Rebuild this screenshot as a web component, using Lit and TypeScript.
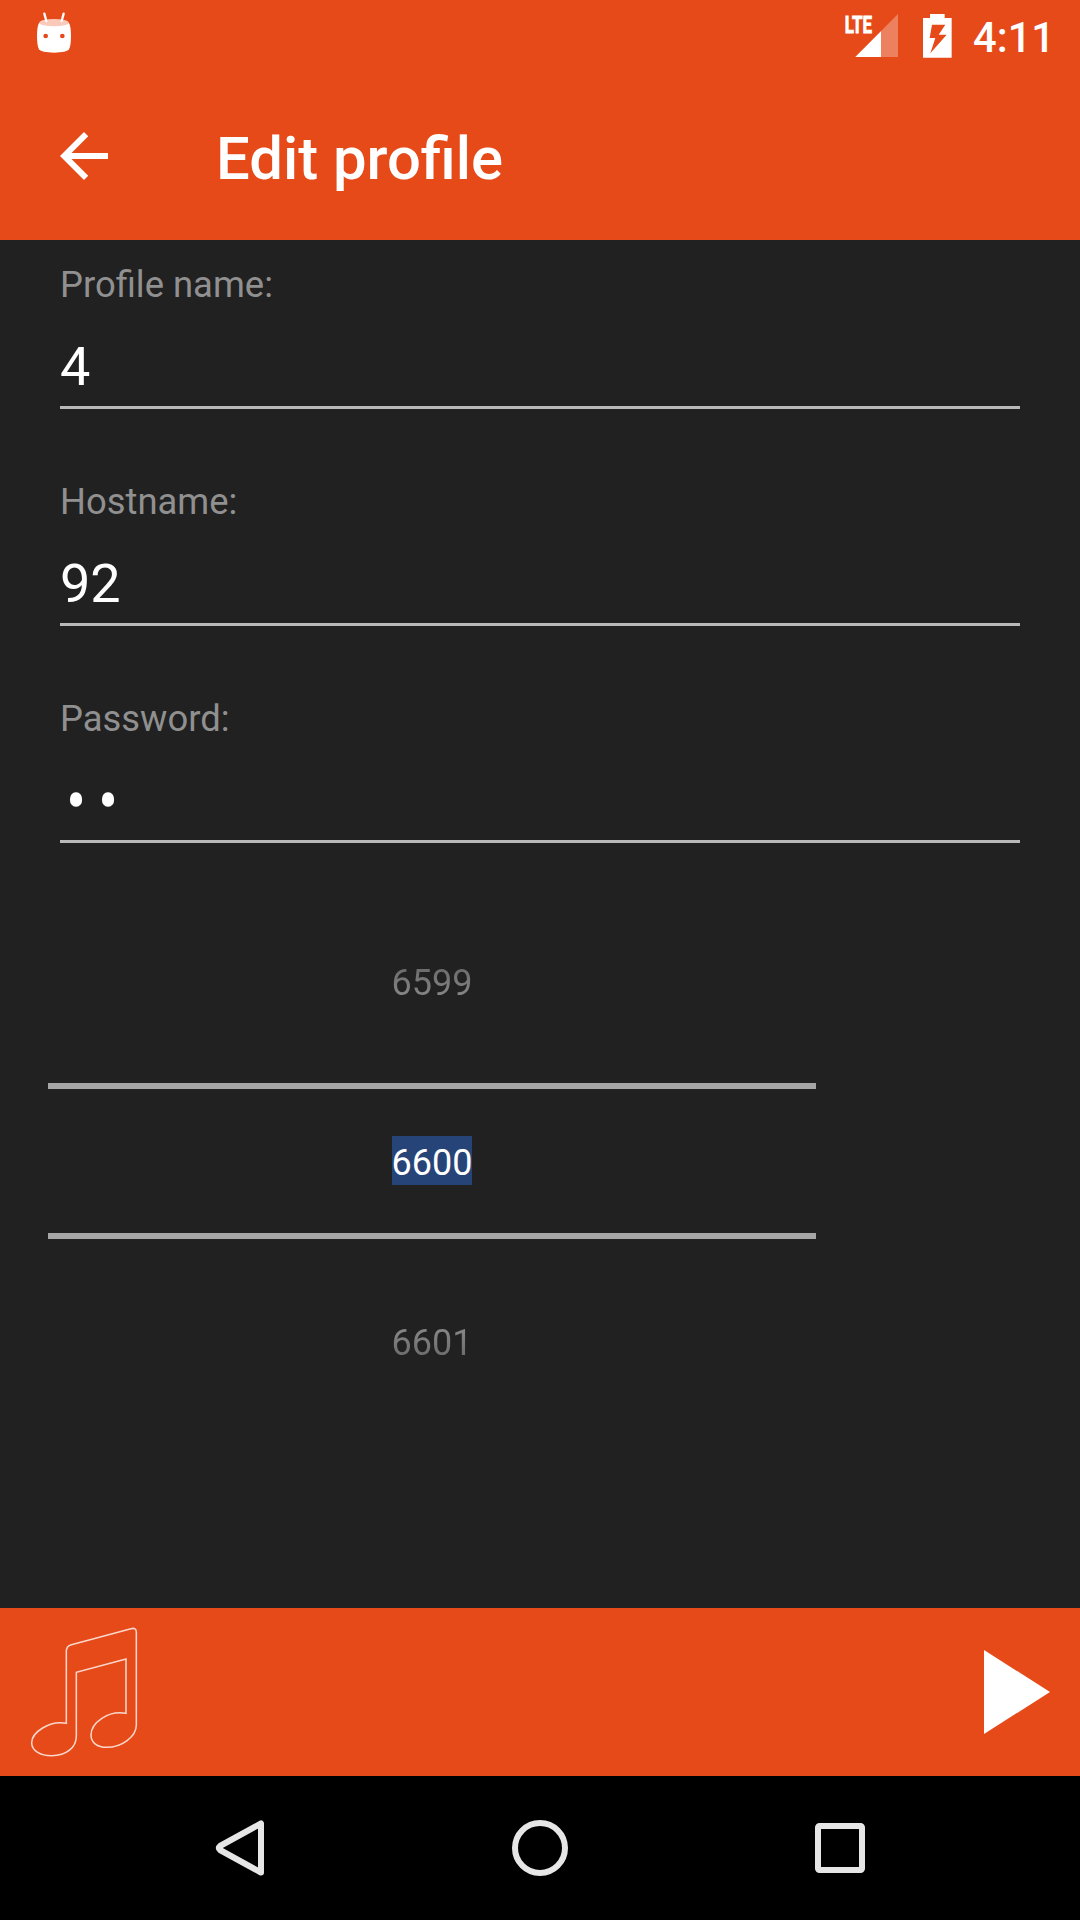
import { LitElement, html, css } from "lit";
import { customElement, property } from "lit/decorators.js";

@customElement("status-bar")
class StatusBar extends LitElement {
  static styles = css`
    :host {
      display: flex;
      justify-content: space-between;
      height: 72px;
      color: #fff;
    }
    svg {
      display: block;
    }
    .right {
      display: flex;
    }
    .lte {
      font: 700 74px Roboto, sans-serif;
      stroke: #fff;
      stroke-width: 2.5px;
    }
    .clock {
      width: 112px;
      padding-right: 25px;
      padding-top: 10px;
      font: 500 41.6px/56px Roboto, sans-serif;
      text-align: right;
      box-sizing: border-box;
    }
  `;
  render() {
    return html`
      <svg width="80" height="72" viewBox="0 0 240 216">
        <path
          d="M117 69Q162 53 207 69Q213 80 213 107Q213 138 207 148Q200 158 162 158Q124 158 117 148Q111 138 111 107Q111 80 117 69Z"
          fill="#fff"
        />
        <ellipse cx="162" cy="68" rx="44" ry="11" fill="#fac9ba" />
        <path d="M133 41l6 22M191 41l-6 22" stroke="#fff" stroke-width="7" stroke-linecap="round" />
        <circle cx="137" cy="108" r="7" fill="#e64a19" />
        <circle cx="187" cy="108" r="7" fill="#e64a19" />
      </svg>
      <div class="right">
        <svg width="148" height="72" viewBox="0 0 444 216">
          <path d="M106 171L234 42V171Z" fill="#fff" fill-opacity=".3" />
          <path d="M106 171L183 94V171Z" fill="#fff" />
          <text class="lte" x="74" y="100" textLength="82" lengthAdjust="spacingAndGlyphs" fill="#fff">LTE</text>
          <path
            fill="#fff"
            fill-rule="evenodd"
            d="M330 42H374V54H395V173H309V54H330ZM336 74L329 114H346L331 160L380 104H356L376 74Z"
          />
        </svg>
        <div class="clock">4:11</div>
      </div>
    `;
  }
}

@customElement("form-field")
class FormField extends LitElement {
  @property() label = "";
  @property() value = "";
  @property({ type: Boolean }) secret = false;

  static styles = css`
    :host {
      display: block;
      padding: 21px 60px 48px;
    }
    .label {
      font-size: 36.4px;
      line-height: 48px;
      color: #909090;
    }
    .value {
      height: 63px;
      margin-top: 26px;
      padding-bottom: 8px;
      border-bottom: 3px solid #b9b9b9;
      font-size: 54px;
      line-height: 64px;
      color: #fff;
    }
    .secret {
      display: inline-block;
      padding-left: 7px;
      letter-spacing: 13.8px;
      -webkit-text-stroke: 1.2px #fff;
      transform: scaleY(1.14);
      transform-origin: 0 32px;
    }
  `;
  render() {
    return html`
      <div class="label">${this.label}</div>
      <div class="value"><span class=${this.secret ? "secret" : ""}>${this.value}</span></div>
    `;
  }
}

@customElement("number-picker")
class NumberPicker extends LitElement {
  @property({ type: Number }) value = 0;

  static styles = css`
    :host {
      display: block;
      width: 768px;
      margin-left: 48px;
      font-size: 36px;
      text-align: center;
      color: #fff;
    }
    .side {
      height: 192px;
      display: flex;
      justify-content: center;
      box-sizing: border-box;
    }
    .before {
      padding-top: 65px;
    }
    .after {
      padding-top: 77px;
    }
    span {
      height: 49px;
      line-height: 55px;
    }
    .side span {
      color: transparent;
      background-clip: text;
      -webkit-background-clip: text;
    }
    .before span {
      background-image: linear-gradient(#606060, #8e8e8e);
    }
    .after span {
      background-image: linear-gradient(#929292, #646464);
    }
    .current {
      height: 156px;
      display: flex;
      justify-content: center;
      align-items: flex-start;
      padding-top: 47px;
      box-sizing: border-box;
      border-top: 6px solid #a6a6a6;
      border-bottom: 6px solid #a6a6a6;
    }
    .current span {
      background: #264477;
    }
  `;
  render() {
    return html`
      <div class="side before"><span>${this.value - 1}</span></div>
      <div class="current"><span>${this.value}</span></div>
      <div class="side after"><span>${this.value + 1}</span></div>
    `;
  }
}

@customElement("app-root")
class AppRoot extends LitElement {
  static styles = css`
    :host {
      display: flex;
      flex-direction: column;
      width: 1080px;
      height: 1920px;
      overflow: hidden;
      background: #212121;
      font-family: Roboto, sans-serif;
    }
    svg {
      display: block;
    }
    .header {
      background: #e64a19;
      height: 240px;
    }
    .toolbar {
      display: flex;
      align-items: center;
      height: 168px;
      padding-left: 48px;
      box-sizing: border-box;
    }
    .title {
      margin-left: 96px;
      padding-top: 5px;
      font-size: 59.8px;
      line-height: 72px;
      font-weight: 500;
      color: #fff;
    }
    .content {
      flex: 1;
    }
    .player {
      display: flex;
      justify-content: space-between;
      height: 168px;
      background: #e64a19;
    }
    .nav {
      display: flex;
      justify-content: center;
      gap: 200px;
      align-items: center;
      height: 144px;
      background: #000;
    }
  `;
  render() {
    return html`
      <div class="header">
        <status-bar></status-bar>
        <div class="toolbar">
          <svg width="72" height="72" viewBox="0 0 24 24" fill="#fff">
            <path d="M20 11H7.83l5.59-5.59L12 4l-8 8 8 8 1.41-1.41L7.83 13H20v-2z" />
          </svg>
          <div class="title">Edit profile</div>
        </div>
      </div>
      <div class="content">
        <form-field label="Profile name:" value="4"></form-field>
        <form-field label="Hostname:" value="92"></form-field>
        <form-field label="Password:" value="••" secret></form-field>
        <number-picker value="6600"></number-picker>
      </div>
      <div class="player">
        <svg width="180" height="168" viewBox="0 54 540 504">
          <path
            d="M199 400V184Q199 168 214 164L393 116Q409 112 409 127V405C409 440 365 472 320 472C292 472 273 458 273 435C273 398 325 360 378 370V207L229 247V438C229 473 199 497 155 497C120 497 95 481 95 458C95 428 148 390 199 400Z"
            fill="none"
            stroke="#fff"
            stroke-opacity=".78"
            stroke-width="4.6"
          />
        </svg>
        <svg width="140" height="168" viewBox="0 54 420 504">
          <path d="M132 180L330 306L132 432Z" fill="#fff" />
        </svg>
      </div>
      <div class="nav">
        <svg width="100" height="144" viewBox="190 1776 100 144">
          <path
            d="M261 1823.5V1872.5L220 1850Q217.5 1848 220 1846Z"
            fill="none"
            stroke="#e6e6e6"
            stroke-width="6"
            stroke-linejoin="round"
          />
        </svg>
        <svg width="100" height="144" viewBox="490 1776 100 144">
          <circle cx="540" cy="1848" r="25" fill="none" stroke="#e6e6e6" stroke-width="6" />
        </svg>
        <svg width="100" height="144" viewBox="790 1776 100 144">
          <rect x="818" y="1826" width="44" height="44" rx="1.5" fill="none" stroke="#e6e6e6" stroke-width="6" />
        </svg>
      </div>
    `;
  }
}
